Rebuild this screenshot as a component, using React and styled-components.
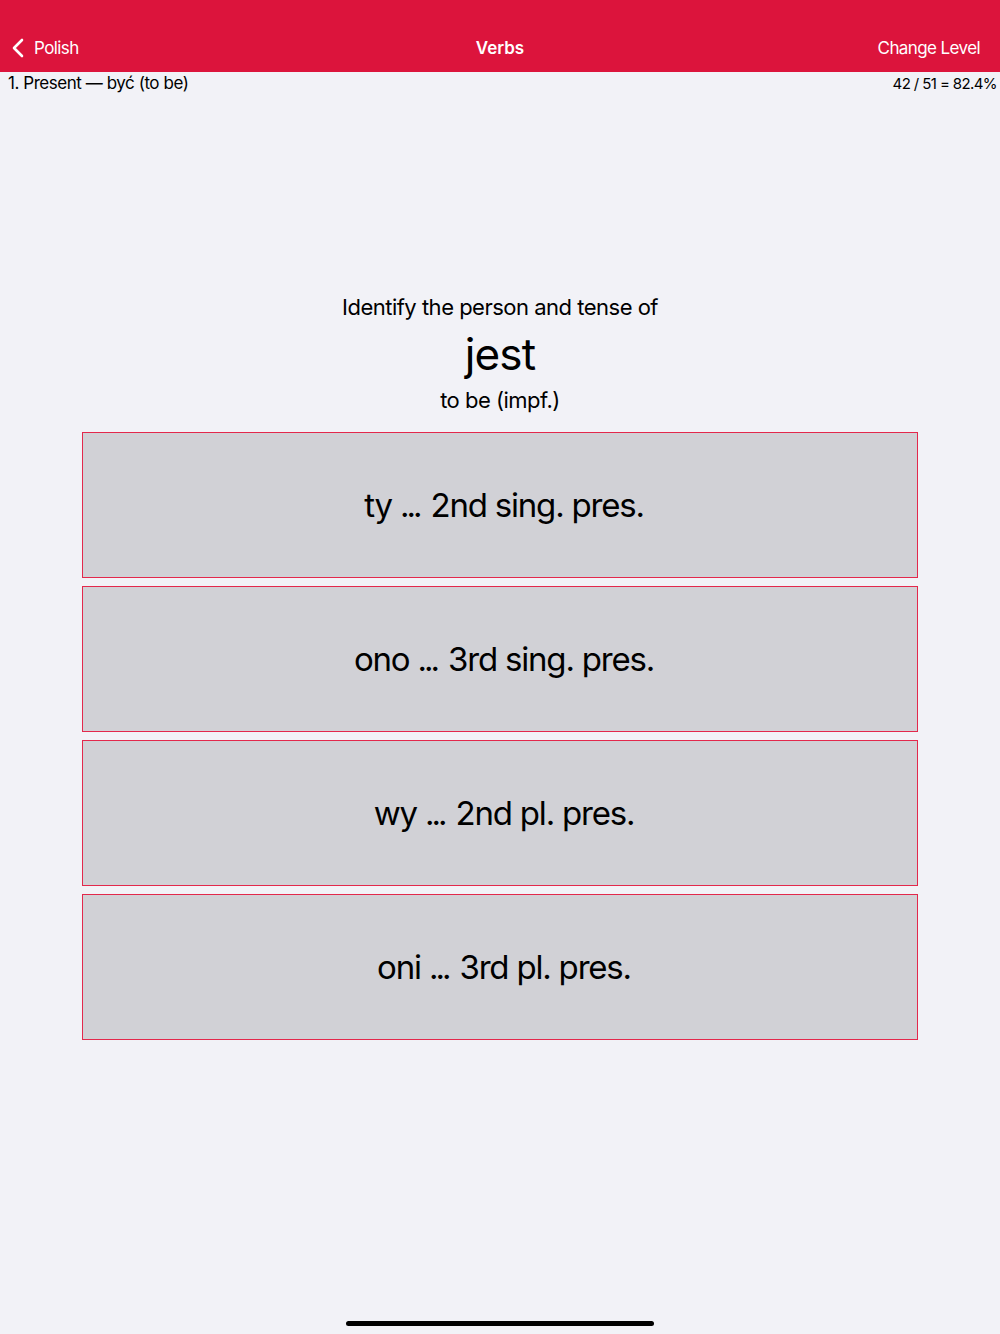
import React from "react";
import styled, { createGlobalStyle } from "styled-components";

const Global = createGlobalStyle`
  html, body { margin: 0; padding: 0; }
  body {
    background: #f2f2f7;
    font-family: Inter, "Noto Sans", "Liberation Sans", sans-serif;
    color: #000;
  }
`;

const Page = styled.div`
  min-height: 1334px;
  display: flex;
  flex-direction: column;
  background: #f2f2f7;
`;

const NavBar = styled.header`
  height: 72px;
  background: #dc143c;
  display: flex;
  align-items: flex-end;
  justify-content: space-between;
  padding: 0 20px 13px 11px;
  box-sizing: border-box;
  position: relative;
  color: #fff;
  font-size: 17px;
  line-height: 22px;
`;

const BackButton = styled.div`
  display: flex;
  align-items: center;
  gap: 9px;
  letter-spacing: -0.6px;
`;

const NavTitle = styled.div`
  position: absolute;
  left: 0;
  right: 0;
  bottom: 13px;
  text-align: center;
  font-weight: 600;
  pointer-events: none;
`;

const NavAction = styled.div`
  letter-spacing: -0.6px;
`;

const InfoRow = styled.div`
  display: flex;
  justify-content: space-between;
  align-items: center;
  height: 22px;
  padding: 0 3px 0 8px;
`;

const Lesson = styled.div`
  font-size: 17px;
  letter-spacing: -0.45px;
`;

const Score = styled.div`
  font-size: 15px;
  letter-spacing: -0.6px;
`;

const Prompt = styled.section`
  margin-top: 199px;
  display: flex;
  flex-direction: column;
  align-items: center;
`;

const Instruction = styled.div`
  font-size: 22px;
  line-height: 28px;
  letter-spacing: -0.5px;
`;

const Word = styled.div`
  font-size: 44px;
  line-height: 52px;
  margin-top: 7px;
  letter-spacing: -0.8px;
`;

const Meaning = styled.div`
  font-size: 22px;
  line-height: 28px;
  margin-top: 6px;
  letter-spacing: -0.5px;
`;

const Choices = styled.div`
  margin: 18px 82px 0;
  display: flex;
  flex-direction: column;
  gap: 8px;
`;

const Choice = styled.button`
  height: 146px;
  width: 100%;
  background: #d1d1d6;
  border: 1px solid #e3284c;
  box-sizing: border-box;
  font-family: inherit;
  font-size: 33px;
  color: #000;
  letter-spacing: -1.2px;
  padding: 0 0 0 8px;
  display: flex;
  align-items: center;
  justify-content: center;
  white-space: pre;
  cursor: pointer;
`;

const Dots = styled.span`
  letter-spacing: -3px;
  margin-right: 3px;
`;

const HomeIndicator = styled.div`
  position: fixed;
  left: 346px;
  width: 308px;
  top: 1321px;
  height: 5px;
  border-radius: 3px;
  background: #000;
`;

const choices = [
  ["ty", "2nd sing. pres."],
  ["ono", "3rd sing. pres."],
  ["wy", "2nd pl. pres."],
  ["oni", "3rd pl. pres."],
];

export default function App() {
  return (
    <Page>
      <Global />
      <NavBar>
        <BackButton>
          <svg width="14" height="20" viewBox="0 0 14 20">
            <path d="M11 2 L3 10 L11 18" fill="none" stroke="#fff" strokeWidth="2.6" strokeLinecap="round" strokeLinejoin="round" />
          </svg>
          <span>Polish</span>
        </BackButton>
        <NavTitle>Verbs</NavTitle>
        <NavAction>Change Level</NavAction>
      </NavBar>
      <InfoRow>
        <Lesson>1. Present — być (to be)</Lesson>
        <Score>42 / 51 = 82.4%</Score>
      </InfoRow>
      <Prompt>
        <Instruction>Identify the person and tense of</Instruction>
        <Word>jest</Word>
        <Meaning>to be (impf.)</Meaning>
      </Prompt>
      <Choices>
        {choices.map(([who, what]) => (
          <Choice key={who}>
            {who + " "}
            <Dots>...</Dots>
            {" " + what}
          </Choice>
        ))}
      </Choices>
      <HomeIndicator />
    </Page>
  );
}
